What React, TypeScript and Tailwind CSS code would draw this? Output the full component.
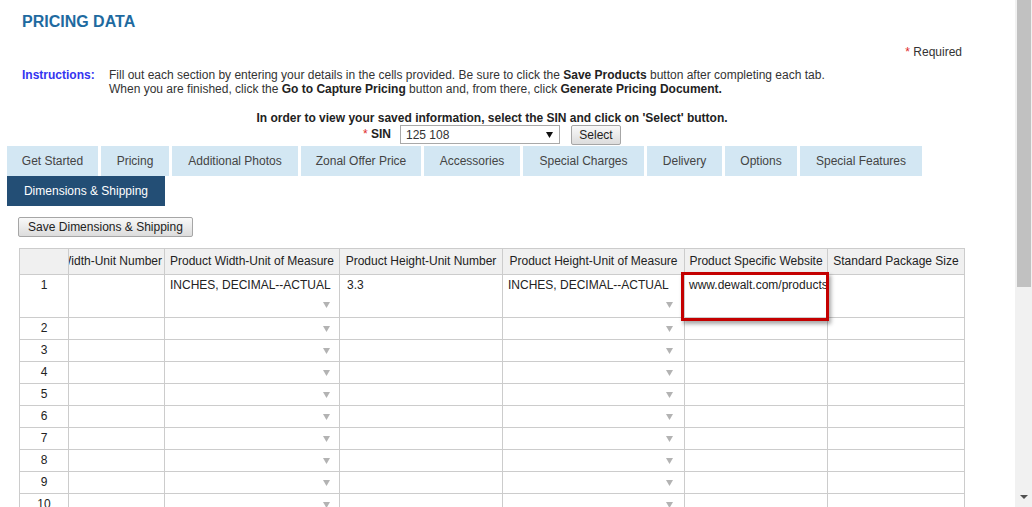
import React from "react";

const tabs1: { label: string; w: string }[] = [
  { label: "Get Started", w: "w-[91px]" },
  { label: "Pricing", w: "w-[68px]" },
  { label: "Additional Photos", w: "w-[126px]" },
  { label: "Zonal Offer Price", w: "w-[120px]" },
  { label: "Accessories", w: "w-[96px]" },
  { label: "Special Charges", w: "w-[121px]" },
  { label: "Delivery", w: "w-[75px]" },
  { label: "Options", w: "w-[72px]" },
  { label: "Special Features", w: "w-[122px]" },
];

const headers = [
  "Product Height-Unit Number",
  "Product Height-Unit of Measure",
  "Product Specific Website",
  "Standard Package Size",
];

function Arrow() {
  return (
    <svg width="7" height="6" viewBox="0 0 7 6" className="block">
      <polygon points="0,0 7,0 3.5,6" fill="#b3b3b3" />
    </svg>
  );
}

const cell = "border-r border-b border-[#cccccc] bg-white";
const hcell =
  "border-r border-b border-[#cccccc] bg-[#f0f0f0] h-[26px] flex items-center justify-center whitespace-nowrap overflow-hidden text-[#222]";

function DropCell({ pr }: { pr: string }) {
  return (
    <div className={`${cell} h-[22px] flex items-center justify-end ${pr}`}>
      <Arrow />
    </div>
  );
}

export default function App() {
  const rows = [2, 3, 4, 5, 6, 7, 8, 9, 10, 11, 12];
  return (
    <div className="flex h-[507px] w-[1032px] overflow-hidden bg-white font-['Liberation_Sans',Arial,sans-serif] text-[12px] leading-[14px] text-[#333]">
      <div className="w-[1015px] shrink-0">
        <h1 className="pl-[22px] pt-[12px] text-[16px] leading-[20px] font-bold text-[#1e6aa0]">
          PRICING DATA
        </h1>
        <div className="mt-[13px] pr-[53px] text-right">
          <span className="text-[#e02a2a]">*</span> Required
        </div>
        <div className="mt-[9px] flex pl-[22px]">
          <div className="w-[87px] shrink-0 font-bold text-[#3434f0]">Instructions:</div>
          <div>
            <div>
              Fill out each section by entering your details in the cells provided. Be sure to click the{" "}
              <b className="text-[#222]">Save Products</b> button after completing each tab.
            </div>
            <div>
              When you are finished, click the <b className="text-[#222]">Go to Capture Pricing</b> button and,
              from there, click <b className="text-[#222]">Generate Pricing Document.</b>
            </div>
          </div>
        </div>
        <div className="mt-[15px] w-[984px] text-center">
          <div className="font-bold text-[#222]">
            In order to view your saved information, select the SIN and click on 'Select' button.
          </div>
          <div className="flex h-[21px] items-start justify-center">
            <div className="leading-[19px] font-bold text-[#222]">
              <span className="font-normal text-[#e02a2a]">*</span> SIN
            </div>
            <div className="ml-[9px] flex h-[19px] w-[160px] items-center justify-between border border-[#a9a9a9] bg-white pl-[5px] pr-[6px] text-[#333]">
              <span>125 108</span>
              <svg width="7" height="6" viewBox="0 0 7 6" className="block">
                <polygon points="0,0 7,0 3.5,6" fill="#111" />
              </svg>
            </div>
            <div className="ml-[11px] h-[20px] w-[50px] rounded-[2px] border border-[#a6a6a6] bg-linear-to-b from-[#f9f9f9] to-[#dcdcdc] text-center leading-[18px] text-[#222]">
              Select
            </div>
          </div>
        </div>
        <div className="flex gap-[3px] pl-[7px]">
          {tabs1.map((t) => (
            <div
              key={t.label}
              className={`${t.w} h-[30px] bg-[#d3e7f3] text-center leading-[30px] text-[#444]`}
            >
              {t.label}
            </div>
          ))}
        </div>
        <div className="flex pl-[7px]">
          <div className="h-[30px] w-[158px] bg-[#234e75] text-center leading-[30px] text-white">
            Dimensions &amp; Shipping
          </div>
        </div>
        <div className="ml-[18px] mt-[11px] h-[20px] w-[175px] rounded-[2px] border border-[#a6a6a6] bg-linear-to-b from-[#f9f9f9] to-[#dcdcdc] text-center leading-[18px] text-[#222]">
          Save Dimensions &amp; Shipping
        </div>

        <div className="relative ml-[19px] mt-[11px] w-[946px]">
          <div className="grid grid-cols-[49px_96px_175px_163px_182px_143px_137px] border-l border-t border-[#cccccc] leading-[21px]">
            {/* header */}
            <div className={hcell}></div>
            <div className={`${hcell} !justify-end pr-[2px]`}>
              <span>Product Width-Unit Number</span>
            </div>
            <div className={hcell}>Product Width-Unit of Measure</div>
            {headers.map((h) => (
              <div key={h} className={hcell}>
                {h}
              </div>
            ))}

            {/* row 1 */}
            <div className={`${cell} h-[43px] bg-[#f0f0f0] text-center text-[#222]`}>1</div>
            <div className={`${cell} h-[43px]`}></div>
            <div className={`${cell} h-[43px] pl-[5px] text-[#222]`}>
              <div className="whitespace-nowrap">INCHES, DECIMAL--ACTUAL</div>
              <div className="flex h-[21px] items-start justify-end pr-[9px] pt-[6px]">
                <Arrow />
              </div>
            </div>
            <div className={`${cell} h-[43px] pl-[7px] text-[#222]`}>3.3</div>
            <div className={`${cell} h-[43px] pl-[5px] text-[#222]`}>
              <div className="whitespace-nowrap">INCHES, DECIMAL--ACTUAL</div>
              <div className="flex h-[21px] items-start justify-end pr-[11px] pt-[6px]">
                <Arrow />
              </div>
            </div>
            <div className={`${cell} h-[43px] overflow-hidden whitespace-nowrap pl-[4px] text-[#222]`}>
              www.dewalt.com/products/dcd771c2
            </div>
            <div className={`${cell} h-[43px]`}></div>

            {rows.map((r) => (
              <React.Fragment key={r}>
                <div className={`${cell} h-[22px] bg-[#f0f0f0] text-center text-[#222]`}>{r}</div>
                <div className={`${cell} h-[22px]`}></div>
                <DropCell pr="pr-[9px]" />
                <div className={`${cell} h-[22px]`}></div>
                <DropCell pr="pr-[11px]" />
                <div className={`${cell} h-[22px]`}></div>
                <div className={`${cell} h-[22px]`}></div>
              </React.Fragment>
            ))}
          </div>
          <div className="absolute left-[662px] top-[24px] h-[49px] w-[148px] border-[3px] border-[#c40000] shadow-[2px_3px_4px_rgba(0,0,0,0.35)]"></div>
        </div>
      </div>

      <div className="flex h-full w-[17px] shrink-0 flex-col bg-[#f1f1f1]">
        <div className="ml-[2px] h-[287px] w-[14px] bg-[#c1c1c1]"></div>
        <div className="flex-1"></div>
        <div className="flex justify-center pb-[8px]">
          <svg width="8" height="4" viewBox="0 0 8 4" className="block">
            <polygon points="0,0 8,0 4,4" fill="#505050" />
          </svg>
        </div>
      </div>
    </div>
  );
}
